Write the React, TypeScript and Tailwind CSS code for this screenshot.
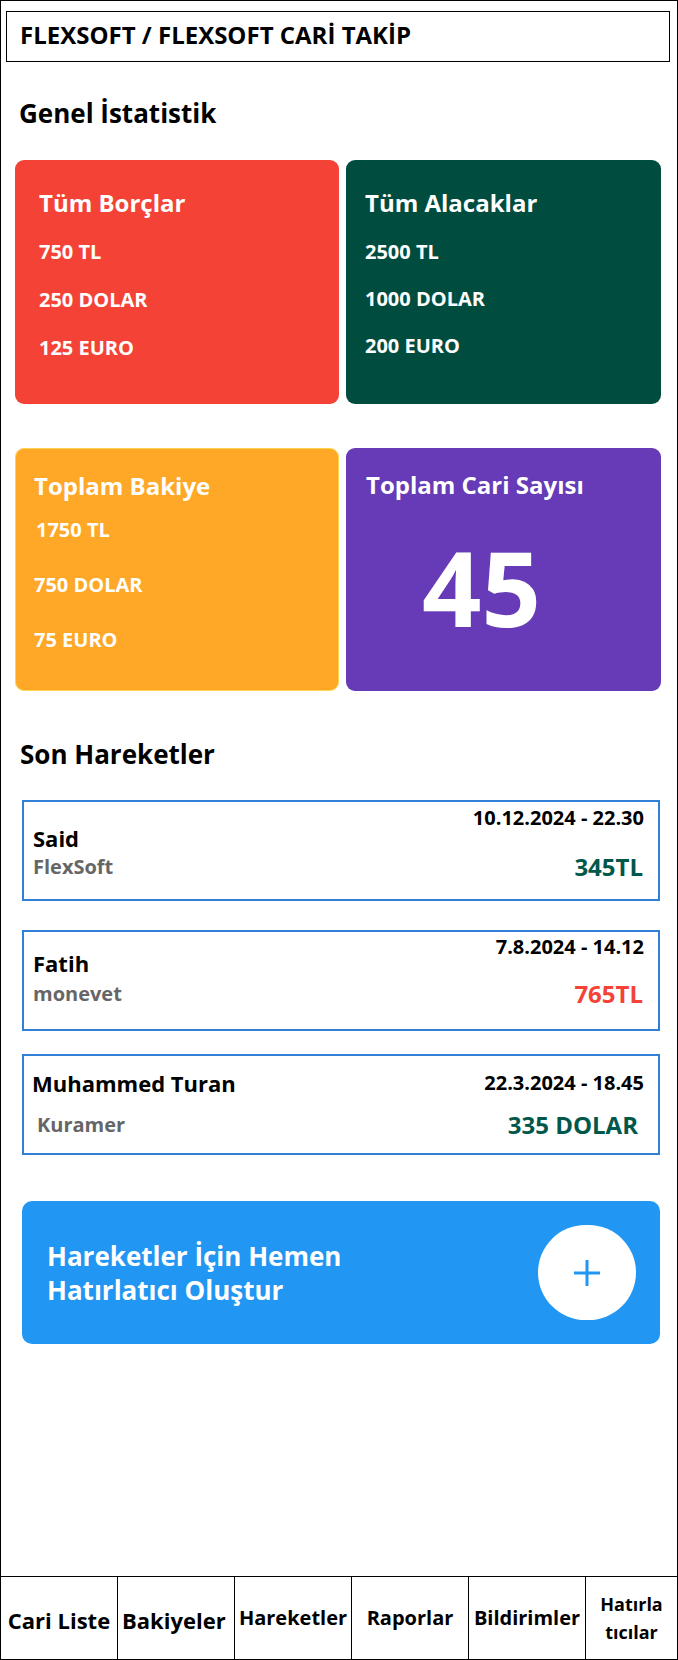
import React from 'react';

type Tx = {
  name: string;
  company: string;
  date: string;
  amount: string;
  tone: 'pos' | 'neg';
  top: string;
  pad: string;
  nameGap: string;
  subGap: string;
};

const txs: Tx[] = [
  {
    name: 'Said',
    company: 'FlexSoft',
    date: '10.12.2024 - 22.30',
    amount: '345TL',
    tone: 'pos',
    top: '',
    pad: 'pt-[6px]',
    nameGap: 'mt-0',
    subGap: 'mt-[5px]',
  },
  {
    name: 'Fatih',
    company: 'monevet',
    date: '7.8.2024 - 14.12',
    amount: '765TL',
    tone: 'neg',
    top: 'mt-[29px]',
    pad: 'pt-[5px]',
    nameGap: '-mt-[4px]',
    subGap: 'mt-[7px]',
  },
];

const tabs = ['Cari Liste', 'Bakiyeler', 'Hareketler', 'Raporlar', 'Bildirimler'];

export default function App() {
  return (
    <div
      className="w-[678px] h-[1660px] border border-black bg-white flex flex-col text-black"
      style={{ fontFamily: '"Open Sans", "Noto Sans", sans-serif' }}
    >
      {/* top bar */}
      <div className="mt-[10px] ml-[5px] mr-[7px] h-[51px] border border-black flex items-center pl-[13px] pb-[3px]">
        <h1 className="text-[24px] font-bold leading-none">FLEXSOFT / FLEXSOFT CARİ TAKİP</h1>
      </div>

      <h2 className="mt-[36px] ml-[18px] text-[26px] font-bold leading-[30px]">Genel İstatistik</h2>

      {/* stats */}
      <div className="mt-[32px] ml-[14px] grid grid-cols-[324px_315px] gap-x-[7px] gap-y-[44px]">
        <div className="h-[244px] rounded-[9px] bg-[#f44336] text-white pl-[24px] pt-[28px]">
          <p className="text-[24px] font-bold leading-[30px]">Tüm Borçlar</p>
          <div className="mt-[22px] flex flex-col gap-[24px] text-[20px] font-bold leading-[24px]">
            <p>750 TL</p>
            <p>250 DOLAR</p>
            <p>125 EURO</p>
          </div>
        </div>
        <div className="h-[244px] rounded-[9px] bg-[#004d40] text-white pl-[19px] pt-[28px]">
          <p className="text-[24px] font-bold leading-[30px]">Tüm Alacaklar</p>
          <div className="mt-[22px] flex flex-col gap-[23px] text-[20px] font-bold leading-[24px]">
            <p>2500 TL</p>
            <p>1000 DOLAR</p>
            <p>200 EURO</p>
          </div>
        </div>
        <div className="h-[243px] rounded-[9px] bg-[#ffa726] border border-[#ffd54f] text-white pl-[18px] pt-[22px]">
          <p className="text-[24px] font-bold leading-[30px]">Toplam Bakiye</p>
          <div className="mt-[17px] flex flex-col gap-[31px] text-[20px] font-bold leading-[24px]">
            <p className="pl-[2px]">1750 TL</p>
            <p>750 DOLAR</p>
            <p>75 EURO</p>
          </div>
        </div>
        <div className="h-[243px] rounded-[9px] bg-[#673ab7] text-white pl-[20px] pt-[22px] flex flex-col">
          <p className="text-[24px] font-bold leading-[30px]">Toplam Cari Sayısı</p>
          <p className="mt-[27px] pl-[56px] text-[104px] font-bold leading-[120px]">45</p>
        </div>
      </div>

      <h2 className="mt-[48px] ml-[19px] text-[26px] font-bold leading-[30px]">Son Hareketler</h2>

      {/* last transactions */}
      <div className="mt-[31px] ml-[21px] mr-[17px] flex flex-col">
        {txs.map((t) => {
          const amountColor = t.tone === 'pos' ? 'text-[#00574a]' : 'text-[#f44336]';
          return (
            <div key={t.name} className={`${t.top} h-[101px] border-2 border-[#2f80d6] pl-[9px] pr-[14px] ${t.pad}`}>
              <p className="text-right text-[20px] font-bold leading-[20px]">{t.date}</p>
              <div className="flex justify-between items-end">
                <div className="flex flex-col">
                  <p className={`${t.nameGap} text-[22px] font-bold leading-[20px]`}>{t.name}</p>
                  <p className={`${t.subGap} text-[20px] font-bold text-[#666666] leading-[28px]`}>{t.company}</p>
                </div>
                <p className={`pr-[1px] text-[24px] font-bold leading-[28px] ${amountColor}`}>{t.amount}</p>
              </div>
            </div>
          );
        })}
        <div className="mt-[23px] h-[101px] border-2 border-[#2f80d6] pl-[8px] pr-[10px] pt-[12px]">
          <div className="flex justify-between items-center pr-[4px]">
            <p className="text-[22px] font-bold leading-[30px]">Muhammed Turan</p>
            <p className="text-[20px] font-bold leading-[24px]">22.3.2024 - 18.45</p>
          </div>
          <div className="mt-[13px] flex justify-between items-center pl-[5px] pr-[10px]">
            <p className="text-[20px] font-bold text-[#666666] leading-[26px]">Kuramer</p>
            <p className="text-[24px] font-bold leading-[28px] text-[#00574a]">335 DOLAR</p>
          </div>
        </div>
      </div>

      {/* reminder banner */}
      <div className="mt-[46px] ml-[21px] mr-[17px] h-[143px] rounded-[10px] bg-[#2196f3] flex items-center justify-between pl-[25px] pr-[24px]">
        <p className="text-[26px] font-bold leading-[34px] text-white">
          Hareketler İçin Hemen
          <br />
          Hatırlatıcı Oluştur
        </p>
        <div className="w-[98px] h-[95px] rounded-full bg-white flex items-center justify-center">
          <svg width="30" height="30" viewBox="0 0 30 30" fill="none">
            <path d="M15 2v26M2 15h26" stroke="#2196f3" strokeWidth="3" />
          </svg>
        </div>
      </div>

      <div className="flex-1" />

      {/* bottom nav */}
      <nav className="h-[83px] border-t border-black flex">
        {tabs.map((label, i) => (
          <div
            key={label}
            className={`w-[117px] shrink-0 border-r border-black flex items-center font-bold ${
              i < 2 ? 'text-[22px] pt-[4px]' : 'text-[20px]'
            } ${i === 1 ? 'justify-start pl-[4px]' : 'justify-center'}`}
          >
            {label}
          </div>
        ))}
        <div className="flex-1 flex items-center justify-center text-center text-[18px] font-bold leading-[28px]">
          Hatırla
          <br />
          tıcılar
        </div>
      </nav>
    </div>
  );
}
